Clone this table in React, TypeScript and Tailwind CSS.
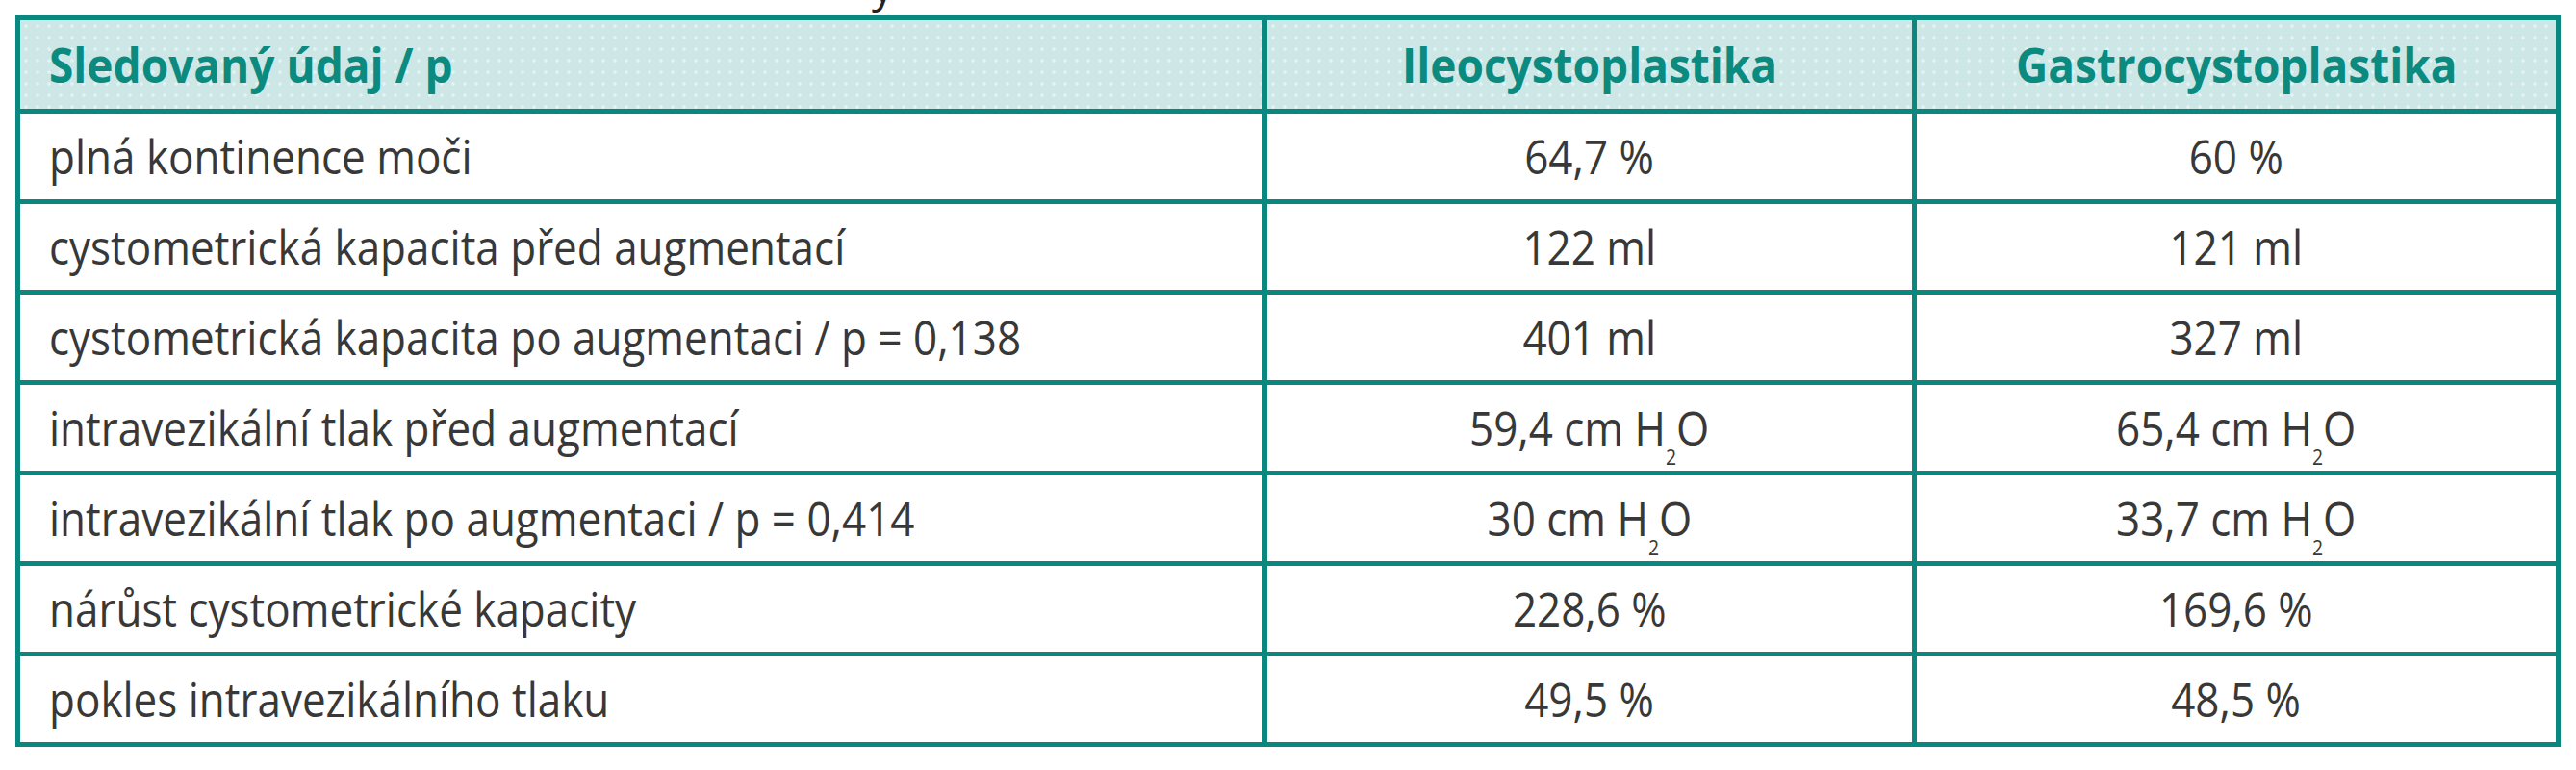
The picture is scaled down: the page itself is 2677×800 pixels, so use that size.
const sub = <sub className="text-[22px] align-[-14px]">2</sub>

const rows: [React.ReactNode, React.ReactNode, React.ReactNode][] = [
  ['plná kontinence moči', '64,7 %', '60 %'],
  ['cystometrická kapacita před augmentací', '122 ml', '121 ml'],
  ['cystometrická kapacita po augmentaci / p = 0,138', '401 ml', '327 ml'],
  ['intravezikální tlak před augmentací', <>59,4 cm H{sub}O</>, <>65,4 cm H{sub}O</>],
  ['intravezikální tlak po augmentaci / p = 0,414', <>30 cm H{sub}O</>, <>33,7 cm H{sub}O</>],
  ['nárůst cystometrické kapacity', '228,6 %', '169,6 %'],
  ['pokles intravezikálního tlaku', '49,5 %', '48,5 %'],
]

const headCell =
  'bg-[#cde7e7] bg-[radial-gradient(circle,#e3f2f2_1.5px,transparent_2px)] bg-[length:12px_12px] flex items-center text-[50px] font-bold text-[#0b8a80]'

export default function App() {
  return (
    <div className="w-[2677px] h-[800px] bg-white font-['Open_Sans',sans-serif]">
      {/* cut-off caption above the table */}
      <div className="h-[16px] overflow-hidden">
        <div className="-mt-[40px] pl-[906px] text-[46px] leading-[48px] text-[#222]">y</div>
      </div>

      <div className="ml-[16px] w-[2645px] bg-[#0a877e] p-[5px] grid grid-cols-[1291px_670px_664px] grid-rows-[92px_repeat(7,89px)] gap-[5px]">
        <div className={headCell + ' pl-[30px]'}>
          <span className="inline-block scale-x-[0.92] origin-left">Sledovaný údaj / p</span>
        </div>
        <div className={headCell + ' justify-center'}>
          <span className="inline-block scale-x-[0.92]">Ileocystoplastika</span>
        </div>
        <div className={headCell + ' justify-center'}>
          <span className="inline-block scale-x-[0.92]">Gastrocystoplastika</span>
        </div>

        {rows.map((r, i) => (
          <div key={i} className="contents">
            <div className="bg-white flex items-center pl-[30px] text-[50px] text-[#383838]">
              <span className="inline-block scale-x-[0.88] origin-left whitespace-nowrap">{r[0]}</span>
            </div>
            <div className="bg-white flex items-center justify-center text-[50px] text-[#383838]">
              <span className="inline-block scale-x-[0.88] whitespace-nowrap">{r[1]}</span>
            </div>
            <div className="bg-white flex items-center justify-center text-[50px] text-[#383838]">
              <span className="inline-block scale-x-[0.88] whitespace-nowrap">{r[2]}</span>
            </div>
          </div>
        ))}
      </div>
    </div>
  )
}
